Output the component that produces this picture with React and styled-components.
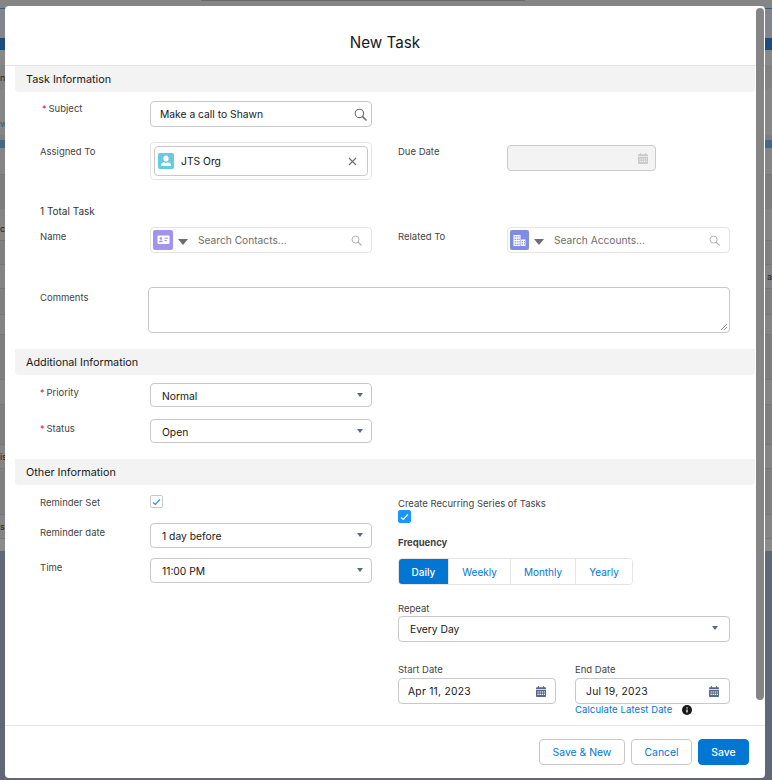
import React from 'react';
import styled, { createGlobalStyle } from 'styled-components';

const fontStack = 'Inter, "Liberation Sans", Arial, sans-serif';
const labelColor = '#444444';
const linkColor = '#0176d3';
const slate = '#56698d';

const GlobalStyle = createGlobalStyle`
  html, body {
    margin: 0;
    padding: 0;
    height: 100%;
    background: #5f6877;
    font-family: ${fontStack};
    -webkit-font-smoothing: antialiased;
  }
  * { box-sizing: border-box; }
`;

const Page = styled.div`
  position: relative;
  width: 772px;
  height: 780px;
  overflow: hidden;
`;

const Backdrop = styled.div`
  width: 100%;
  height: 100%;
  display: flex;
  flex-direction: column;
`;

const Strip = styled.div`
  flex: none;
  height: ${(p) => p.$h}px;
  background: ${(p) => p.$bg || '#858585'};
  border-bottom: ${(p) => (p.$line ? '1px solid #777' : 'none')};
  display: flex;
  justify-content: space-between;
  align-items: center;
  overflow: hidden;
  font-size: 9px;
  color: #222;
`;

const BackdropBit = styled.span`
  color: ${(p) => p.$color || '#222'};
`;

const Overlay = styled.div`
  position: absolute;
  inset: 0;
  padding: 6px 7px 2px 5px;
`;

const Modal = styled.div`
  position: relative;
  width: 760px;
  height: 772px;
  background: #fff;
  border-radius: 4px;
  display: flex;
  flex-direction: column;
  overflow: hidden;
  color: #181818;
`;

const ScrollThumb = styled.div`
  position: absolute;
  top: 2px;
  right: 1px;
  width: 8px;
  height: 692px;
  background: #858585;
  border-radius: 4px;
`;

const Header = styled.header`
  height: 60px;
  flex: none;
  padding-top: 26px;
  text-align: center;
  font-size: 15.2px;
  line-height: 22px;
  font-weight: 400;
  color: #181818;
  border-bottom: 1px solid #e5e5e5;
`;

const Body = styled.div`
  flex: 1;
  padding: 0 10px;
  min-height: 0;
`;

const SectionTitle = styled.h3`
  margin: ${(p) => p.$top || 0}px 0 0;
  height: 26px;
  padding-left: 11px;
  background: #f3f3f3;
  border-radius: 0 0 4px 4px;
  font-size: 10.8px;
  font-weight: 400;
  line-height: 28px;
  color: #181818;
`;

const Row = styled.div`
  display: grid;
  grid-template-columns: ${(p) => p.$cols || '110px 222px 26px 109px 223px'};
  margin-top: ${(p) => p.$top}px;
  padding: 0 25px;
  align-items: start;
`;

const Label = styled.label`
  display: block;
  padding-top: ${(p) => p.$pad || 0}px;
  font-size: 9.5px;
  line-height: 16px;
  color: ${labelColor};
  grid-column: ${(p) => p.$col || 'auto'};
`;

const Star = styled.span`
  color: #ea001e;
  font-size: 9px;
  margin-left: ${(p) => p.$shift || 0}px;
  margin-right: 2px;
`;

const TotalLabel = styled.div`
  padding: 24px 25px 0;
  font-size: 10px;
  line-height: 14px;
  color: #333;
`;

const fieldBase = `
  display: flex;
  align-items: center;
  border: 1px solid #c9c9c9;
  border-radius: 4px;
  background: #fff;
  font-size: 10.3px;
  color: #181818;
`;

const InputBox = styled.div`
  ${fieldBase}
  width: ${(p) => (p.$w ? `${p.$w}px` : 'auto')};
  height: 26px;
  padding: 0 ${(p) => p.$pr || 8}px 0 ${(p) => p.$pl || 9}px;
  justify-content: space-between;
  margin-top: ${(p) => p.$top || 0}px;
  background: ${(p) => (p.$disabled ? '#f3f3f3' : '#fff')};
  letter-spacing: ${(p) => (p.$wide ? '0.25px' : '0')};
`;

const PillWrap = styled.div`
  height: 38px;
  padding: 3px;
  border: 1px solid #e5e5e5;
  border-radius: 4px;
`;

const Pill = styled.div`
  ${fieldBase}
  height: 30px;
  padding: 0 10px 0 3px;
  justify-content: space-between;
`;

const PillName = styled.span`
  flex: 1;
  margin-left: 7px;
`;

const IconTile = styled.span`
  flex: none;
  display: flex;
  align-items: center;
  justify-content: center;
  width: ${(p) => p.$w}px;
  height: ${(p) => p.$h || p.$w}px;
  background: ${(p) => p.$bg};
  border-radius: 2px;
`;

const LookupBox = styled.div`
  ${fieldBase}
  height: 26px;
  border-color: #e5e5e5;
  padding: 0 9px 0 2px;
`;

const LookupCaret = styled.span`
  flex: none;
  width: 0;
  height: 0;
  margin: 3px 0 0 5px;
  border-left: 5px solid transparent;
  border-right: 5px solid transparent;
  border-top: 6px solid #706e6b;
`;

const Placeholder = styled.span`
  flex: 1;
  margin-left: 10px;
  color: #706e6b;
  font-size: 10.2px;
`;

const TextArea = styled.div`
  height: 46px;
  border: 1px solid #c9c9c9;
  border-radius: 4px;
  position: relative;
`;

const Grip = styled.svg`
  position: absolute;
  right: 1px;
  bottom: 1px;
`;

const SelectBox = styled.div`
  ${fieldBase}
  height: ${(p) => p.$h || 24}px;
  padding: ${(p) => (p.$h ? 0 : 2)}px ${(p) => p.$pr || 8}px 0 11px;
  margin-top: ${(p) => p.$top || 0}px;
  justify-content: space-between;
`;

const SelectCaret = styled.span`
  flex: none;
  width: 0;
  height: 0;
  margin-top: -2px;
  border-left: 3.5px solid transparent;
  border-right: 3.5px solid transparent;
  border-top: 4px solid ${slate};
`;

const Columns = styled.div`
  display: grid;
  grid-template-columns: 332px 332px;
  column-gap: 26px;
  padding: 0 25px;
`;

const Column = styled.div`
  min-width: 0;
`;

const LeftField = styled.div`
  display: grid;
  grid-template-columns: 110px 222px;
  margin-top: ${(p) => p.$top}px;
  align-items: start;
`;

const CheckBox = styled.span`
  display: flex;
  align-items: center;
  justify-content: center;
  width: 13px;
  height: 13px;
  border-radius: 2px;
  border: 1px solid ${(p) => (p.$on ? '#1b96ff' : '#c9c9c9')};
  background: ${(p) => (p.$on ? '#1b96ff' : '#fff')};
`;

const RightLabel = styled.div`
  margin: ${(p) => p.$top || 0}px 0 -1px;
  padding-top: 1px;
  font-size: 9.5px;
  line-height: 14px;
  color: ${labelColor};
  font-weight: ${(p) => (p.$bold ? 700 : 400)};
`;

const ButtonGroup = styled.div`
  display: flex;
  width: 235px;
  height: 27px;
  margin-top: 9px;
  border: 1px solid #e5e5e5;
  border-radius: 4px;
  overflow: hidden;
`;

const Segment = styled.div`
  width: ${(p) => p.$w}px;
  flex: ${(p) => (p.$w ? 'none' : 1)};
  display: flex;
  align-items: center;
  justify-content: center;
  padding-top: 1px;
  font-size: 10px;
  font-weight: ${(p) => (p.$on ? 500 : 400)};
  color: ${(p) => (p.$on ? '#fff' : linkColor)};
  background: ${(p) => (p.$on ? linkColor : '#fff')};
  border-right: ${(p) => (p.$last ? 'none' : '1px solid #e5e5e5')};
`;

const DateGrid = styled.div`
  display: grid;
  grid-template-columns: 158px 155px;
  column-gap: 19px;
  margin-top: 20px;
`;

const LinkRow = styled.div`
  display: flex;
  align-items: center;
  height: 11px;
`;

const CalcLink = styled.a`
  font-size: 9.5px;
  line-height: 11px;
  color: ${linkColor};
  letter-spacing: 0.1px;
`;

const InfoDot = styled.svg`
  margin-left: 10px;
`;

const Footer = styled.footer`
  flex: none;
  height: 53px;
  border-top: 1px solid #e5e5e5;
  display: flex;
  justify-content: flex-end;
  gap: 6px;
  padding: 13px 16px 0 0;
`;

const Button = styled.button`
  height: 26px;
  width: ${(p) => p.$w}px;
  padding: 0;
  border: 1px solid ${(p) => (p.$primary ? linkColor : '#c9c9c9')};
  border-radius: 4px;
  background: ${(p) => (p.$primary ? linkColor : '#fff')};
  color: ${(p) => (p.$primary ? '#fff' : linkColor)};
  font-family: ${fontStack};
  font-size: 10.4px;
  font-weight: ${(p) => (p.$primary ? 500 : 400)};
`;

const SearchIcon = ({ color = '#706e6b', size = 13 }) => (
  <svg width={size} height={size} viewBox="0 0 13 13" fill="none" stroke={color} strokeWidth="1.1">
    <circle cx="5.4" cy="5.4" r="4.2" />
    <path d="M8.4 8.4L12 12" strokeWidth="1.5" strokeLinecap="round" />
  </svg>
);

const CalendarIcon = ({ color = slate }) => (
  <svg width="10" height="11" viewBox="0 0 10 11" fill={color}>
    <rect x="1.8" y="0" width="1.2" height="2" rx=".5" />
    <rect x="7" y="0" width="1.2" height="2" rx=".5" />
    <path d="M.8 1.2H9.2A.8.8 0 0 1 10 2V3.2H0V2A.8.8 0 0 1 .8 1.2Z" />
    <path fillRule="evenodd" d="M0 4H10V10.2A.8.8 0 0 1 9.2 11H.8A.8.8 0 0 1 0 10.2ZM1.5 5.4V6.6H2.8V5.4ZM3.6 5.4V6.6H4.9V5.4ZM5.7 5.4V6.6H7V5.4ZM7.8 5.4V6.6H9V5.4ZM1.5 7.7V8.9H2.8V7.7ZM3.6 7.7V8.9H4.9V7.7ZM5.7 7.7V8.9H7V7.7ZM7.8 7.7V8.9H9V7.7Z" />
  </svg>
);

const UserIcon = () => (
  <svg width="12" height="12" viewBox="0 0 12 12" fill="#fff">
    <ellipse cx="6" cy="3.6" rx="2.6" ry="3" />
    <path d="M1 11V9.8C1 8.5 2.6 7.6 4.2 7.3C5.3 8.2 6.7 8.2 7.8 7.3C9.4 7.6 11 8.5 11 9.8V11Z" />
  </svg>
);

const ContactIcon = () => (
  <svg width="13" height="10" viewBox="0 0 13 10">
    <rect x="0.5" y="0.5" width="12" height="8.5" rx="1" fill="#fff" />
    <circle cx="3.9" cy="3.5" r="1.3" fill="#a094ed" />
    <path d="M1.9 7.2C2 6 3 5.5 3.9 5.5S5.8 6 5.9 7.2Z" fill="#a094ed" />
    <path d="M7.4 3.2H11M7.4 5.6H10" stroke="#a094ed" strokeWidth="1" />
  </svg>
);

const BuildingIcon = () => (
  <svg width="13" height="13" viewBox="0 0 13 13" fill="#fff">
    <path
      fillRule="evenodd"
      d="M0.5 1H7.5V12H0.5ZM1.6 2.3V3.6H2.8V2.3ZM3.6 2.3V3.6H4.8V2.3ZM5.5 2.3V3.6H6.7V2.3ZM1.6 4.8V6.1H2.8V4.8ZM3.6 4.8V6.1H4.8V4.8ZM5.5 4.8V6.1H6.7V4.8ZM1.6 7.3V8.6H2.8V7.3ZM3.6 7.3V8.6H4.8V7.3ZM5.5 7.3V8.6H6.7V7.3ZM1.6 9.8V11.1H2.8V9.8ZM3.6 9.8V11.1H4.8V9.8ZM5.5 9.8V11.1H6.7V9.8Z"
    />
    <path
      fillRule="evenodd"
      d="M8.2 5.5H12.5V12H8.2ZM9 7V8.2H10V7ZM11 7V8.2H12V7ZM9 9.3V10.5H10V9.3ZM11 9.3V10.5H12V9.3Z"
    />
  </svg>
);

const CheckMark = ({ color }) => (
  <svg width="9" height="8" viewBox="0 0 9 8" fill="none" stroke={color} strokeWidth="1.3">
    <path d="M1 4.4L3.3 6.4L8 1.4" />
  </svg>
);

const Select = ({ children, ...rest }) => (
  <SelectBox {...rest}>
    <span>{children}</span>
    <SelectCaret />
  </SelectBox>
);

// the page behind the dialog, only its edges show
const backdropStrips = [
  { h: 1, bg: 'linear-gradient(to right, #858585 26%, #686868 26%, #686868 68%, #858585 68%)' },
  { h: 7 },
  { h: 1, bg: '#2d5f8f' },
  { h: 29, bg: '#82868b' },
  { h: 12, bg: '#1a4c7e' },
  { h: 15, bg: '#888888' },
  { h: 24, bg: '#828282', left: 'n' },
  { h: 22, bg: '#868686' },
  { h: 24, bg: '#868686', left: 'w', color: '#1c5f98' },
  { h: 5, bg: '#7f7f7f' },
  { h: 8, bg: '#46678b' },
  { h: 27, bg: '#858585', line: true },
  { h: 34, bg: '#7d7d7d' },
  { h: 8, bg: '#858585' },
  { h: 24, bg: '#858585', left: 'c', line: true },
  { h: 24, bg: '#808080', line: true },
  { h: 24, bg: '#848484', right: 'a', line: true },
  { h: 26, bg: '#808080', line: true },
  { h: 20, bg: '#848484', line: true },
  { h: 45, bg: '#7e7e7e', line: true },
  { h: 25, bg: '#858585', line: true },
  { h: 40, bg: '#7f7f7f', line: true },
  { h: 24, bg: '#858585', left: 'is', line: true },
  { h: 46, bg: '#808080', line: true },
  { h: 24, bg: '#858585', left: 's', line: true },
  { h: 12, bg: '#8b8b8b' },
];

export default function App() {
  return (
    <Page>
      <GlobalStyle />
      <Backdrop>
        {backdropStrips.map((s, i) => (
          <Strip key={i} $h={s.h} $bg={s.bg} $line={s.line}>
            <BackdropBit $color={s.color}>{s.left}</BackdropBit>
            <BackdropBit>{s.right}</BackdropBit>
          </Strip>
        ))}
      </Backdrop>
      <Overlay>
        <Modal>
          <ScrollThumb />
          <Header>New Task</Header>
          <Body>
            <SectionTitle>Task Information</SectionTitle>
            <Row $top={9}>
              <Label><Star $shift={2}>*</Star>Subject</Label>
              <InputBox $pr={4}>
                Make a call to Shawn
                <SearchIcon />
              </InputBox>
            </Row>
            <Row $top={15}>
              <Label $pad={2}>Assigned To</Label>
              <PillWrap>
                <Pill>
                  <IconTile $w={16} $bg="#65cae4"><UserIcon /></IconTile>
                  <PillName>JTS Org</PillName>
                  <svg width="9" height="9" viewBox="0 0 9 9" stroke="#706e6b" strokeWidth="1.1">
                    <path d="M1 1L8 8M8 1L1 8" />
                  </svg>
                </Pill>
              </PillWrap>
              <Label $pad={2} $col="4">Due Date</Label>
              <InputBox $disabled $top={3} $pr={7} $w={149}>
                <span />
                <CalendarIcon color="#c9c9c9" />
              </InputBox>
            </Row>
            <TotalLabel>1 Total Task</TotalLabel>
            <Row $top={9}>
              <Label $pad={2}>Name</Label>
              <LookupBox>
                <IconTile $w={20} $bg="#a094ed"><ContactIcon /></IconTile>
                <LookupCaret />
                <Placeholder>Search Contacts...</Placeholder>
                <SearchIcon color="#b0adab" size={11} />
              </LookupBox>
              <Label $pad={2} $col="4">Related To</Label>
              <LookupBox>
                <IconTile $w={19} $h={20} $bg="#7f8de1"><BuildingIcon /></IconTile>
                <LookupCaret />
                <Placeholder>Search Accounts...</Placeholder>
                <SearchIcon color="#b0adab" size={11} />
              </LookupBox>
            </Row>
            <Row $top={34} $cols="108px 582px">
              <Label $pad={3}>Comments</Label>
              <TextArea>
                <Grip width="8" height="8" viewBox="0 0 8 8" stroke="#777" strokeWidth="0.8">
                  <path d="M1 7L7 1M4 7L7 4" />
                </Grip>
              </TextArea>
            </Row>
            <SectionTitle $top={16}>Additional Information</SectionTitle>
            <Row $top={8}>
              <Label $pad={2}><Star>*</Star>Priority</Label>
              <Select>Normal</Select>
            </Row>
            <Row $top={12}>
              <Label $pad={2}><Star>*</Star>Status</Label>
              <Select>Open</Select>
            </Row>
            <SectionTitle $top={16}>Other Information</SectionTitle>
            <Columns>
              <Column>
                <LeftField $top={10}>
                  <Label>Reminder Set</Label>
                  <CheckBox><CheckMark color="#1b96ff" /></CheckBox>
                </LeftField>
                <LeftField $top={12}>
                  <Label $pad={2}>Reminder date</Label>
                  <Select $h={25}>1 day before</Select>
                </LeftField>
                <LeftField $top={10}>
                  <Label $pad={2}>Time</Label>
                  <Select $h={25}>11:00 PM</Select>
                </LeftField>
              </Column>
              <Column>
                <RightLabel $top={11}>Create Recurring Series of Tasks</RightLabel>
                <CheckBox $on><CheckMark color="#fff" /></CheckBox>
                <RightLabel $top={12} $bold>Frequency</RightLabel>
                <ButtonGroup>
                  <Segment $w={50} $on>Daily</Segment>
                  <Segment $w={62}>Weekly</Segment>
                  <Segment $w={65}>Monthly</Segment>
                  <Segment $last>Yearly</Segment>
                </ButtonGroup>
                <RightLabel $top={16}>Repeat</RightLabel>
                <Select $h={26} $top={1} $pr={11}>Every Day</Select>
                <DateGrid>
                  <div>
                    <RightLabel>Start Date</RightLabel>
                    <InputBox $top={2} $pl={9} $pr={9} $wide>
                      Apr 11, 2023
                      <CalendarIcon />
                    </InputBox>
                  </div>
                  <div>
                    <RightLabel>End Date</RightLabel>
                    <InputBox $top={2} $pl={10} $pr={10} $wide>
                      Jul 19, 2023
                      <CalendarIcon />
                    </InputBox>
                    <LinkRow>
                      <CalcLink>Calculate Latest Date</CalcLink>
                      <InfoDot width="10" height="10" viewBox="0 0 10 10">
                        <circle cx="5" cy="5" r="5" fill="#181818" />
                        <path d="M5 2.2V3.4M5 4.4V7.6" stroke="#fff" strokeWidth="1.3" />
                      </InfoDot>
                    </LinkRow>
                  </div>
                </DateGrid>
              </Column>
            </Columns>
          </Body>
          <Footer>
            <Button $w={86}>Save &amp; New</Button>
            <Button $w={61}>Cancel</Button>
            <Button $w={51} $primary>Save</Button>
          </Footer>
        </Modal>
      </Overlay>
    </Page>
  );
}
